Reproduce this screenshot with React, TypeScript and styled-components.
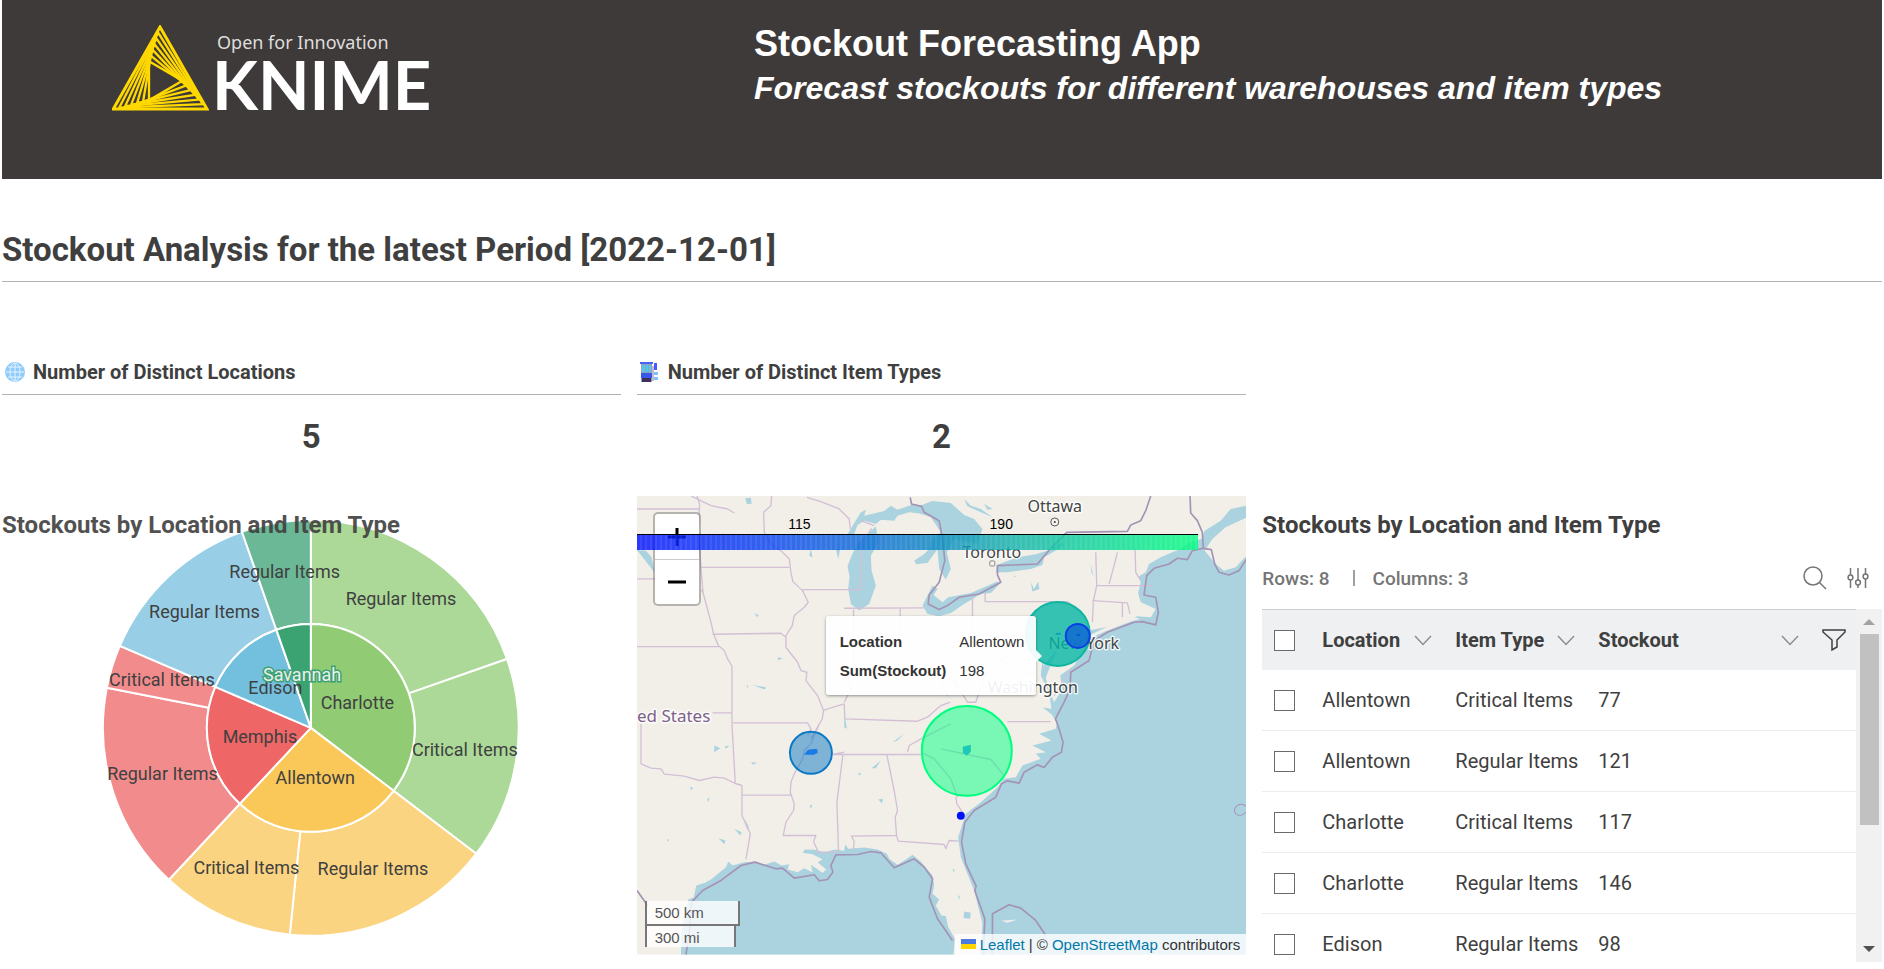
import React from "react";
import styled, { createGlobalStyle } from "styled-components";

const roboto = `Roboto, "Liberation Sans", sans-serif`;
const arial = `"Liberation Sans", Arial, sans-serif`;
const noto = `"Noto Sans", "Open Sans", sans-serif`;

const GlobalStyle = createGlobalStyle`
  *, *::before, *::after { box-sizing: border-box; }
  body { margin: 0; background: #fff; color: #3f3f3f; font-family: ${roboto}; }
  h1, h2, h3, p, figure { margin: 0; }
  button { font: inherit; color: inherit; padding: 0; border: 0; background: none; cursor: pointer; }
  svg { display: block; }
`;

const Page = styled.div`
  padding: 0 2px;
`;

const Header = styled.header`
  display: grid;
  grid-template-columns: 40% 1fr;
  min-height: 179px;
  padding-top: 22px;
  background: #3e3a39;
  color: #fff;
`;

const Logo = styled.div`
  display: flex;
  align-items: flex-start;
  gap: 8px;
  padding: 3px 0 0 110px;
`;

const LogoWords = styled.div`
  display: flex;
  flex-direction: column;
`;

const Slogan = styled.span`
  font: 400 18px/24px ${noto};
  padding-top: 5px;
  color: #dedede;
`;

const Wordmark = styled.span`
  font: 700 67px/60px Lato, sans-serif;
  margin-left: -5px;
`;

const HeaderTitle = styled.h1`
  font: 700 36px/44px ${arial};
`;

const HeaderSubtitle = styled.p`
  font: italic 700 32px/44px ${arial};
`;

const SectionTitle = styled.h2`
  margin-top: 51px;
  padding-bottom: 11px;
  border-bottom: 1px solid #b2b2b2;
  font-size: 33px;
  font-weight: 700;
  line-height: 40px;
`;

const Dashboard = styled.main`
  display: grid;
  grid-template-columns: 619fr 610fr 620fr;
  gap: 39px 16px;
  padding-top: 78px;
`;

const Kpi = styled.section`
  grid-column: ${(p: { $column: number }) => p.$column};
`;

const KpiTitle = styled.h3`
  display: flex;
  align-items: center;
  gap: 8px;
  padding: 0 0 10px 3px;
  border-bottom: 1px solid #b2b2b2;
  font-size: 20px;
  font-weight: 700;
  line-height: 24px;
`;

const KpiValue = styled.p`
  padding-top: 22px;
  text-align: center;
  font-size: 33px;
  font-weight: 700;
  line-height: 40px;
`;

const PanelTitle = styled.h3`
  padding-top: 13px;
  font-size: 24px;
  font-weight: 700;
  line-height: 32px;
`;

const PiePanel = styled.section`
  grid-column: 1;
  display: grid;
  grid-template-areas: "chart";
  align-items: start;
  & > * { grid-area: chart; }
  & > h3 { z-index: 1; opacity: 0.9; }
`;

const PieChart = styled.svg`
  width: 100%;
  font-family: ${roboto};
  font-size: 18px;
`;

const MapPanel = styled.section`
  position: relative;
  align-self: start;
  overflow: hidden;
  font-family: ${arial};
`;

const MapCanvas = styled.svg`
  width: 100%;
  font-family: ${noto};
`;

const ZoomControl = styled.div`
  position: absolute;
  left: 16px;
  top: 16px;
  display: flex;
  flex-direction: column;
  width: 48px;
  border: 2px solid rgba(0, 0, 0, 0.25);
  border-radius: 5px;
  background: #fff;
  background-clip: padding-box;
`;

const ZoomButton = styled.button`
  display: grid;
  place-items: center;
  height: 45px;
  & + & { border-top: 1px solid #ccc; }
`;

const ColorBar = styled.div`
  position: absolute;
  left: 0;
  top: 20px;
  width: 92%;
`;

const BarTicks = styled.div`
  position: relative;
  height: 19px;
  border-bottom: 1px solid #000;
  color: #000;
  font-size: 14px;
  line-height: 16px;
`;

const BarTick = styled.span`
  position: absolute;
  left: ${(p: { $at: number }) => p.$at}%;
  transform: translateX(-50%);
`;

const BarGradient = styled.div`
  height: 15px;
  opacity: 0.82;
  background:
    repeating-linear-gradient(90deg, transparent 0 3px, rgba(255, 255, 255, 0.08) 3px 5px),
    linear-gradient(90deg, #0010ff, #0a48f0 25%, #0b80c8 50%, #12b0ac 66%, #0bd69a 82%, #00ff80);
`;

const Tooltip = styled.div`
  position: absolute;
  left: 189px;
  top: 120px;
  display: grid;
  grid-template-columns: auto auto;
  align-content: center;
  column-gap: 13px;
  width: 210px;
  height: 79px;
  padding-left: 14px;
  justify-content: start;
  border-radius: 3px;
  background: rgba(255, 255, 255, 0.93);
  box-shadow: 0 1px 3px rgba(0, 0, 0, 0.4);
  color: #333;
  font-size: 15px;
  line-height: 29px;
  &::after {
    content: "";
    position: absolute;
    left: 100%;
    top: 34px;
    border: 6px solid transparent;
    border-left-color: rgba(255, 255, 255, 0.93);
    border-right-width: 0;
  }
`;

const ScaleControl = styled.div`
  position: absolute;
  left: 8px;
  bottom: 8px;
  color: #555;
  font-size: 15px;
`;

const ScaleLine = styled.div<{ $width: number; $last?: boolean }>`
  width: ${(p) => p.$width}px;
  height: ${(p) => (p.$last ? 21 : 25)}px;
  padding-left: 8px;
  line-height: 23px;
  border: 2px solid #777;
  border-top: 0;
  border-bottom-width: ${(p) => (p.$last ? 0 : 2)}px;
  background: rgba(255, 255, 255, 0.8);
`;

const Attribution = styled.div`
  position: absolute;
  right: 0;
  bottom: 0;
  display: flex;
  align-items: center;
  gap: 4px;
  height: 21px;
  padding: 0 6px;
  background: rgba(255, 255, 255, 0.8);
  color: #333;
  font-size: 15px;
  a { color: #0078a8; text-decoration: none; }
`;

const TablePanel = styled.section`
  align-self: start;
`;

const TableBar = styled.div`
  display: flex;
  align-items: center;
  height: 32px;
  margin: 21px 0 15px;
  color: #757575;
  font-size: 19px;
  font-weight: 500;
`;

const BarDivider = styled.span`
  width: 2px;
  height: 16px;
  margin: 0 17px 0 24px;
  background: #a0a0a0;
`;

const BarTools = styled.div`
  display: flex;
  align-items: center;
  gap: 20px;
  margin: 0 13px 0 auto;
`;

const TableViewport = styled.div`
  display: flex;
  height: 353px;
  overflow: hidden;
`;

const Table = styled.table`
  flex: 1;
  align-self: flex-start;
  table-layout: fixed;
  border-collapse: separate;
  border-spacing: 0;
  font-size: 20px;
`;

const HeadCell = styled.th<{ $width?: number }>`
  width: ${(p) => (p.$width ? `${p.$width}px` : "auto")};
  height: 61px;
  padding: 0;
  border-top: 1px solid #c6cfd2;
  background: #eef0f2;
  text-align: left;
  font-weight: 700;
  & > button { display: block; }
`;

const HeadLabel = styled.div`
  display: flex;
  align-items: center;
  justify-content: space-between;
  padding-right: 23px;
`;

const Cell = styled.td`
  height: 61px;
  padding: 0;
  border-bottom: 1px solid #ececec;
  white-space: nowrap;
`;

const Check = styled.input.attrs({ type: "checkbox" })`
  appearance: none;
  display: block;
  width: 21px;
  height: 21px;
  margin: 0 0 0 12px;
  border: 1px solid #6a6a6a;
  background: #fff;
`;

const ScrollTrack = styled.div`
  display: flex;
  flex-direction: column;
  align-items: center;
  width: 26px;
  height: 353px;
  background: #f1f1f1;
`;

const ScrollArrow = styled.span<{ $down?: boolean }>`
  width: 12px;
  height: 6px;
  margin: ${(p) => (p.$down ? "auto 0 10px" : "10px 0 9px")};
  background: ${(p) => (p.$down ? "#505050" : "#a3a3a3")};
  clip-path: ${(p) => (p.$down ? "polygon(0 0, 100% 0, 50% 100%)" : "polygon(50% 0, 100% 100%, 0 100%)")};
`;

const ScrollThumb = styled.div`
  width: 19px;
  height: 191px;
  background: #c1c1c1;
`;

/* ---------- logo ---------- */

const TRI_OUTER = [[144, 6], [285, 252], [4, 252]];
const TRI_INNER = [[111, 109], [211, 167], [111, 226]];

function KnimeMark() {
  const steps = 7;
  const rings = Array.from({ length: steps }, (_, k) => {
    const t = k / (steps - 1);
    return TRI_OUTER.map(([x, y], i) => [
      x + (TRI_INNER[i][0] - x) * t,
      y + (TRI_INNER[i][1] - y) * t,
    ].join(",")).join(" ");
  });
  return (
    <svg width="97" height="86" viewBox="0 0 291 258" fill="none" stroke="#ffd800" aria-hidden="true">
      {rings.map((points, i) => (
        <polygon key={i} points={points} strokeWidth={i === 0 ? 9 : 7} />
      ))}
    </svg>
  );
}

/* ---------- sunburst ---------- */

const CX = 309;
const CY = 232;
const R1 = 104;
const R2 = 208;

const regions = [
  { name: "Charlotte", color: "#91cc75", soft: "#acd998", parts: [["Regular Items", 146], ["Critical Items", 117]] },
  { name: "Allentown", color: "#fac858", soft: "#fbd481", parts: [["Regular Items", 121], ["Critical Items", 77]] },
  { name: "Memphis", color: "#ee6666", soft: "#f28b8b", parts: [["Regular Items", 120], ["Critical Items", 25]] },
  { name: "Edison", color: "#73c0de", soft: "#98cfe7", parts: [["Regular Items", 98]] },
  { name: "Savannah", color: "#3ba272", soft: "#6bb896", parts: [["Regular Items", 40]] },
] as { name: string; color: string; soft: string; parts: [string, number][] }[];

const total = regions.reduce((s, r) => s + r.parts.reduce((a, p) => a + p[1], 0), 0);

function at(value: number, r: number) {
  const a = (value / total) * Math.PI * 2;
  return [CX + r * Math.sin(a), CY - r * Math.cos(a)];
}

function sector(from: number, to: number, r0: number, r1: number) {
  const large = (to - from) / total > 0.5 ? 1 : 0;
  return `M${at(from, r0)} L${at(from, r1)} A${r1} ${r1} 0 ${large} 1 ${at(to, r1)} L${at(to, r0)} A${r0} ${r0} 0 ${large} 0 ${at(from, r0)}Z`;
}

function Sunburst() {
  const shapes: React.ReactNode[] = [];
  const labels: React.ReactNode[] = [];
  let pos = 0;
  regions.forEach((r) => {
    const start = pos;
    r.parts.forEach(([label, n]) => {
      shapes.push(<path key={r.name + label} d={sector(pos, pos + n, R1, R2)} fill={r.soft} />);
      const [x, y] = at(pos + n / 2, (R1 + R2) / 2);
      labels.push(<text key={r.name + label} x={x} y={y + 4}>{label}</text>);
      pos += n;
    });
    shapes.push(<path key={r.name} d={sector(start, pos, 0, R1)} fill={r.color} />);
    const [x, y] = at((start + pos) / 2, R1 / 2);
    labels.push(
      r.name === "Savannah"
        ? <text key={r.name} x={x} y={y + 4} fill="#eee" stroke={r.color} strokeWidth="3" paintOrder="stroke">{r.name}</text>
        : <text key={r.name} x={x} y={y + 4}>{r.name}</text>
    );
  });
  return (
    <PieChart viewBox="0 0 619 459" role="img" aria-label="Stockouts by location and item type">
      <g stroke="#fff" strokeWidth="2" strokeLinejoin="round">{shapes}</g>
      <g textAnchor="middle" fill="#404040">{labels}</g>
    </PieChart>
  );
}

/* ---------- map ---------- */

const ocean =
  "M150 1398V1340L160 1280 172 1232 188 1226 196 1190 222 1182 240 1172 285 1135 292 1118 305 1130 340 1120 375 1118 400 1128 430 1118 452 1130 475 1126 470 1142 500 1150 520 1138 545 1150 540 1128 575 1152 586 1142 560 1120 575 1112 545 1096 515 1092 522 1082 552 1083 580 1090 612 1082 640 1086 643 1066 652 1080 700 1076 740 1082 768 1095 775 1110 800 1128 825 1112 845 1098 870 1118 905 1160 910 1190 905 1215 925 1232 915 1250 932 1280 945 1282 952 1315 972 1350 968 1398H1048L1055 1305 1030 1205 990 1105 982 1045 1005 975 1050 940 1100 895 1120 870 1155 865 1175 830 1230 810 1215 795 1245 790 1205 770 1262 755 1225 735 1275 720 1278 700 1262 676 1235 655 1262 660 1255 610 1230 560 1235 515 1250 590 1270 640 1295 600 1288 560 1330 530 1355 490 1375 450 1378 424 1440 412 1520 382 1560 385 1575 360 1552 350 1530 340 1522 312 1530 280 1525 262 1545 250 1555 225 1590 205 1625 190 1650 180 1672 162 1712 150 1722 125 1770 95 1800 60 1848 50V1398Z";

const lakes = [
  "M700 145 735 112 742 160 720 200 722 245 735 290 715 345 685 365 660 345 652 300 656 262 650 232 662 200 680 165Z",
  "M650 135 690 70 705 62 700 80 760 66 780 50 800 62 850 45 890 60 880 75 835 70 800 80 790 95 750 92 735 105 700 95 680 108 668 140Z",
  "M835 62 900 85 930 130 905 150 895 180 880 195 850 215 856 226 890 222 920 180 925 240 945 272 960 240 948 190 970 150 1040 165 1055 120 1030 90 1000 78 960 42 905 36Z",
  "M875 350 905 290 920 300 908 318 935 340 952 325 1020 312 1100 278 1108 284 1080 312 1050 315 1000 345 960 372 925 382 890 375Z",
  "M1095 250 1098 228 1160 205 1215 196 1250 185 1290 160 1300 170 1240 205 1235 228 1200 240 1130 250Z",
  "M343 28 360 26 362 44 348 45ZM540 180 545 205 535 200ZM615 180 628 180 622 210ZM18 183 45 185 62 205 70 250 55 230Z",
  "M370 372 384 380 378 384ZM346 590 350 588 352 600ZM365 588 405 595 402 602ZM440 505 456 508 442 514ZM250 770 268 778 250 790ZM282 772 296 770 284 780ZM176 895 186 896 182 905ZM228 930 236 928 232 940ZM310 1020 332 1030 328 1040ZM262 1048 284 1055 280 1066ZM108 1050 114 1054 108 1058ZM742 932 756 930 754 944ZM536 950 544 948 540 960ZM360 820 378 822 366 828Z",
  "M722 838 750 815 735 838ZM680 855 690 852 688 860ZM640 670 648 720 640 715ZM785 760 820 735 800 755ZM340 990 352 1010 355 1028 346 1015ZM1000 1268 1020 1272 1018 1290 998 1288ZM965 1138 972 1145 968 1150ZM982 1218 988 1225 984 1232ZM1200 280 1210 300 1222 278 1226 300 1205 308ZM1060 45 1085 60 1070 62ZM1000 30 1020 50 1050 60 1085 85 1050 70 1010 52Z",
  "M1150 260 1156 262 1150 266ZM1380 225 1388 262 1382 250ZM1280 480 1255 540 1240 580 1238 530Z",
];

const islands = [
  "M1722 185 1745 150 1785 115 1848 85V200L1815 235 1780 245 1755 225Z",
  "M1375 440 1440 408 1510 384 1528 390 1500 398 1430 425 1382 446Z",
  "M1112 1296 1160 1292 1130 1302ZM1190 1290 1205 1310 1198 1345 1205 1310Z",
];

const stateLines =
  "M18 60H205M198 21 206 45 202 120 210 235 216 310 240 400 248 435 262 470 280 485 290 510 303 532V672M210 235H475M422 21 420 50 398 70 400 130 420 165 455 190 475 210 480 250 486 278 515 305 532 340 520 355 490 380 484 410 465 440 465 475 500 520 510 545 528 550 525 575 560 620 578 665 574 690 540 750M18 270H75M210 302 216 310M18 473H268M245 436 450 433 465 445M245 672H303V702H530L540 720 530 740M578 665 590 660 640 645 642 690 860 697 890 685 930 650 958 640M510 302H690M690 302 688 270 692 225 690 170 722 118M528 25 570 38 625 60 655 90 658 120M668 362V520L650 560 660 600 640 640M640 358 880 357M808 358V480M690 95 730 110M950 620 930 590 960 560 1010 640 1035 640 1060 560 1130 500M640 790 605 797H870M1568 290H1398L1388 335 1385 400M1395 190 1398 290M1460 190 1450 230 1435 285M1513 180 1515 250 1530 275M1385 335 1490 342 1498 375M1475 342V385M1063 312V338H1310L1350 370M1025 315V440M1025 440H1180M1130 698H1260M1320 540 1270 620M870 790 910 810 960 870 980 925M30 705V825L60 838 90 840 100 856 160 862 205 875 250 865 280 868 313 884 333 890M303 705 313 885M333 890V980L358 1035 345 1112M333 919H480M565 705 540 765 520 785 515 810 490 855 480 880 478 910 490 945 488 965 465 1000 457 1040H555L548 1058 562 1090H620M636 798 618 940 623 1090M768 798 790 905 800 965 793 985 797 1040 802 1057 940 1067 945 1080 955 1055 985 1057M667 1085 670 1058 662 1042 795 1040M975 925 978 945 995 970M830 790 835 770 880 745 960 705M930 780 1080 812 1118 858M180 21 240 50 290 60 310 72";

const nationLines =
  "M838 25 842 45 872 52 880 70 925 95 935 150 942 215 925 280 895 318 892 345 925 362 950 350 985 325 1045 315 1110 280 1100 258 1100 230 1220 225 1260 178 1308 130 1490 127 1500 108 1530 95 1545 65 1560 21M1678 21 1680 72 1700 95 1715 130 1718 178M165 1398 175 1330 182 1240 215 1205 270 1175 330 1130 372 1120 435 1140 455 1138 490 1168 550 1158 565 1176 590 1172 606 1150 600 1130 615 1098 680 1097 720 1088 750 1092 790 1137 850 1110 880 1135 905 1170 895 1225 920 1290 965 1355M1058 1398 1062 1290 1032 1205 1036 1192 1005 1125 992 1060 1002 1000 1030 965 1095 925 1112 885 1130 876 1165 883 1180 850 1220 828 1240 836 1265 805 1292 790 1297 760 1280 705 1274 690 1300 640 1318 600 1320 550 1375 515 1390 455 1430 430 1510 400 1535 398 1575 408 1583 370 1575 325 1540 318 1548 260 1570 238 1615 225 1640 208 1670 212 1685 185 1718 178 1742 182 1752 225 1765 250 1795 258 1825 245 1848 210M1085 1398V1275L1135 1248 1170 1258 1215 1295 1245 1340M18 1205 50 1250";

function UsMap() {
  return (
    <MapCanvas viewBox="0 0 610 459" role="img" aria-label="Map of stockouts by location">
      <svg width="610" height="459" viewBox="18 21 1830 1377">
        <rect x="18" y="21" width="1830" height="1377" fill="#f2efe9" />
        <g fill="#aad3df">
          <path d={ocean} />
          {lakes.map((d, i) => <path key={i} d={d} />)}
        </g>
        <g fill="#f2efe9">{islands.map((d, i) => <path key={i} d={d} />)}</g>
        <g fill="none" strokeLinejoin="round">
          <path d={stateLines} stroke="#d3bfd5" strokeWidth="4" />
          <path d={nationLines} stroke="#a493b5" strokeWidth="5" />
          <ellipse cx="1830" cy="963" rx="19" ry="16" transform="rotate(-25 1830 963)" stroke="#a493b5" strokeWidth="3" />
        </g>
      </svg>
      <g fontSize="16" fill="#444" stroke="#fff" strokeWidth="3" strokeOpacity="0.75" strokeLinejoin="round" paintOrder="stroke" textAnchor="middle">
        <text x="418" y="16">Ottawa</text>
        <text x="355" y="62">Toronto</text>
        <text x="447" y="153">New York</text>
        <text x="396" y="197">Washington</text>
        <text x="0" y="226" fontSize="17" fill="#7e5f88" textAnchor="start">ed States</text>
      </g>
      <g fill="#f6f4f0" stroke="#555">
        <circle cx="418" cy="26" r="4" />
        <rect x="353" y="65" width="5" height="5" rx="1" stroke="#888" />
        <circle cx="394" cy="176" r="3" stroke="#999" />
      </g>
      <circle cx="418" cy="26" r="1" fill="#333" />
      <g strokeWidth="2">
        <circle cx="421" cy="138" r="32" fill="#05b7a4" fillOpacity="0.8" stroke="#10b6a2" />
        <path d="M419 138h5" stroke="#12a0b8" />
        <circle cx="441" cy="140" r="12" fill="#1068d0" fillOpacity="0.85" stroke="#0a3ee6" />
        <path d="M440 139h3" stroke="#0c50e0" />
        <circle cx="174" cy="257" r="21" fill="#0b78c4" fillOpacity="0.5" stroke="#0b78c4" />
        <path d="M167 259 171 254 180 253 181 257 177 259Z" fill="#1a7be6" />
        <circle cx="330" cy="255" r="45" fill="#00ff80" fillOpacity="0.5" stroke="#00ff80" />
        <path d="M326 251 334 249 334 256 330 260 326 257Z" fill="#1cc8b6" />
        <circle cx="324" cy="320" r="4" fill="#0010ff" />
      </g>
    </MapCanvas>
  );
}

/* ---------- small icons ---------- */

const Globe = () => (
  <svg width="20" height="20" viewBox="0 0 20 20" aria-hidden="true">
    <circle cx="10" cy="10" r="10" fill="#8fccfb" />
    <g fill="none" stroke="#e3f3ff">
      <ellipse cx="10" cy="10" rx="5" ry="9" />
      <path d="M10 1v18M1 10h18M3 5h14M3 15h14" />
    </g>
  </svg>
);

const Building = () => (
  <svg width="20" height="20" viewBox="0 0 20 20" aria-hidden="true">
    <path d="M1 1h11v19H1z" fill="#8f9fbd" />
    <path d="M0 0h13v2H0z" fill="#4a63f5" />
    <path d="M2 3h3v7H2zM6 3h2v7H6zM9 3h2v7H9z" fill="#51c8ea" />
    <path d="M1 11h11v5H1z" fill="#3758e8" />
    <path d="M2 16h9v4H2z" fill="#3d3159" />
    <path d="M14 1h3v7h-3z" fill="#4a5cff" />
    <path d="M12 4h2v15h-2z" fill="#c9b8cf" />
    <path d="M14 10h4v3h-4zM14 15h4v3h-4z" fill="#7cc2ff" />
  </svg>
);

const Chevron = () => (
  <svg width="18" height="11" viewBox="0 0 18 11" fill="none" stroke="#8c8c8c" strokeWidth="1.4" aria-hidden="true">
    <path d="M1 1 9 9.5 17 1" />
  </svg>
);

const Search = () => (
  <svg width="24" height="24" viewBox="0 0 24 24" fill="none" stroke="#757575" strokeWidth="1.5" aria-hidden="true">
    <circle cx="10" cy="10" r="9" />
    <path d="M16.500 16.500 23 23" />
  </svg>
);

const Sliders = () => (
  <svg width="22" height="22" viewBox="0 0 22 22" fill="none" stroke="#757575" strokeWidth="1.5" aria-hidden="true">
    <path d="M3.500 1v7M3.500 13v8M11 1v12M11 18v3M18.500 1v6M18.500 12v9" />
    <circle cx="3.500" cy="10.500" r="2.400" />
    <circle cx="11" cy="15.500" r="2.400" />
    <circle cx="18.500" cy="9.500" r="2.400" />
  </svg>
);

const Filter = () => (
  <svg width="24" height="24" viewBox="0 0 24 24" fill="none" stroke="#3f3f3f" strokeWidth="1.5" aria-hidden="true">
    <path d="M1 2h22v2l-8 8v7l-5 3v-10L1 4z" />
  </svg>
);

const rows: [string, string, number][] = [
  ["Allentown", "Critical Items", 77],
  ["Allentown", "Regular Items", 121],
  ["Charlotte", "Critical Items", 117],
  ["Charlotte", "Regular Items", 146],
  ["Edison", "Regular Items", 98],
];

export default function App() {
  return (
    <Page>
      <GlobalStyle />
      <Header>
        <Logo>
          <KnimeMark />
          <LogoWords>
            <Slogan>Open for Innovation</Slogan>
            <Wordmark>KNIME</Wordmark>
          </LogoWords>
        </Logo>
        <div>
          <HeaderTitle>Stockout Forecasting App</HeaderTitle>
          <HeaderSubtitle>Forecast stockouts for different warehouses and item types</HeaderSubtitle>
        </div>
      </Header>

      <SectionTitle>Stockout Analysis for the latest Period [2022-12-01]</SectionTitle>

      <Dashboard>
        <Kpi $column={1}>
          <KpiTitle><Globe />Number of Distinct Locations</KpiTitle>
          <KpiValue>5</KpiValue>
        </Kpi>
        <Kpi $column={2}>
          <KpiTitle><Building />Number of Distinct Item Types</KpiTitle>
          <KpiValue>2</KpiValue>
        </Kpi>

        <PiePanel>
          <PanelTitle>Stockouts by Location and Item Type</PanelTitle>
          <Sunburst />
        </PiePanel>

        <MapPanel>
          <UsMap />
          <ZoomControl>
            <ZoomButton aria-label="Zoom in">
              <svg width="18" height="18" viewBox="0 0 18 18" stroke="#000" strokeWidth="3"><path d="M9 0v18M0 9h18" /></svg>
            </ZoomButton>
            <ZoomButton aria-label="Zoom out">
              <svg width="18" height="18" viewBox="0 0 18 18" stroke="#000" strokeWidth="3"><path d="M0 9h18" /></svg>
            </ZoomButton>
          </ZoomControl>
          <ColorBar>
            <BarTicks>
              <BarTick $at={29}>115</BarTick>
              <BarTick $at={65}>190</BarTick>
            </BarTicks>
            <BarGradient />
          </ColorBar>
          <Tooltip>
            <b>Location</b><span>Allentown</span>
            <b>Sum(Stockout)</b><span>198</span>
          </Tooltip>
          <ScaleControl>
            <ScaleLine $width={95}>500 km</ScaleLine>
            <ScaleLine $width={91} $last>300 mi</ScaleLine>
          </ScaleControl>
          <Attribution>
            <svg width="15" height="10" viewBox="0 0 15 10" aria-hidden="true">
              <path fill="#4c7be1" d="M0 0h15v5H0z" />
              <path fill="#ffd500" d="M0 5h15v5H0z" />
            </svg>
            <a href="#leaflet">Leaflet</a>
            <span>|</span>
            <span>© <a href="#osm">OpenStreetMap</a> contributors</span>
          </Attribution>
        </MapPanel>

        <TablePanel>
          <PanelTitle>Stockouts by Location and Item Type</PanelTitle>
          <TableBar>
            <span>Rows: 8</span>
            <BarDivider />
            <span>Columns: 3</span>
            <BarTools>
              <button aria-label="Search"><Search /></button>
              <button aria-label="Settings"><Sliders /></button>
            </BarTools>
          </TableBar>
          <TableViewport>
            <Table>
              <thead>
                <tr>
                  <HeadCell $width={60}><Check aria-label="Select all rows" /></HeadCell>
                  <HeadCell $width={133}><HeadLabel>Location<Chevron /></HeadLabel></HeadCell>
                  <HeadCell $width={143}><HeadLabel>Item Type<Chevron /></HeadLabel></HeadCell>
                  <HeadCell><HeadLabel>Stockout<Chevron /></HeadLabel></HeadCell>
                  <HeadCell $width={34}><button aria-label="Filter"><Filter /></button></HeadCell>
                </tr>
              </thead>
              <tbody>
                {rows.map(([location, type, n], i) => (
                  <tr key={i}>
                    <Cell><Check aria-label={`Select row ${i + 1}`} /></Cell>
                    <Cell>{location}</Cell>
                    <Cell>{type}</Cell>
                    <Cell colSpan={2}>{n}</Cell>
                  </tr>
                ))}
              </tbody>
            </Table>
            <ScrollTrack aria-hidden="true">
              <ScrollArrow />
              <ScrollThumb />
              <ScrollArrow $down />
            </ScrollTrack>
          </TableViewport>
        </TablePanel>
      </Dashboard>
    </Page>
  );
}
